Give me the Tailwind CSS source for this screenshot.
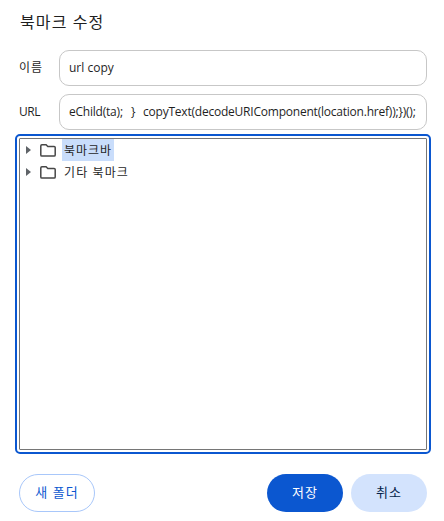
<!DOCTYPE html>
<html lang="ko">

<head>
  <meta charset="UTF-8">
  <meta name="viewport" content="width=device-width, initial-scale=1.0">
  <title>북마크 수정</title>
  <script src="https://cdn.jsdelivr.net/npm/@tailwindcss/browser@4"></script>
</head>

<body class="h-[521px] overflow-hidden bg-white pr-[17px] pl-[19px] pt-[10px] font-['Open_Sans','Noto_Sans_CJK_KR',sans-serif] text-[12px] text-[#1f1f1f]">

  <h1 class="h-6 pl-px text-[16px] leading-6 tracking-[1.1px] whitespace-nowrap">북마크 수정</h1>

  <div class="mt-4 flex flex-col gap-2">
    <div class="flex h-9 items-center">
      <label class="w-10 shrink-0 tracking-[1px]">이름</label>
      <div class="flex h-9 min-w-0 flex-1 items-center rounded-[10px] border border-[#c7c7c7] px-[9px] whitespace-pre">url copy</div>
    </div>
    <div class="flex h-9 items-center">
      <label class="w-10 shrink-0 tracking-[-0.4px]">URL</label>
      <div class="flex h-9 min-w-0 flex-1 items-center rounded-[10px] border border-[#c7c7c7] px-[9px] tracking-[-0.22px] whitespace-pre"><span class="w-[62px] shrink-0">eChild(ta);</span><span class="w-[12px] shrink-0">}</span><span>copyText(decodeURIComponent(location.href));})();</span></div>
    </div>
  </div>

  <!-- folder tree, focused -->
  <div class="mt-2 h-[312px] rounded-[1px] border border-[#767676] outline-2 outline-offset-2 outline-[#0b57d0]">
    <div class="flex h-[22px] items-center">
      <svg class="ml-[6px] h-[8px] w-[5px]" viewBox="0 0 5 8" fill="#5f6368"><path d="M0 0L5 4L0 8Z" /></svg>
      <svg class="ml-[9px] h-[13px] w-4" viewBox="0 0 16 13" fill="none" stroke="#474747" stroke-width="1.5"><path d="M.8 1.9Q.8.8 1.9.8H6.1L7.8 2.5H14.1Q15.2 2.5 15.2 3.6V11Q15.2 12.1 14.1 12.1H1.9Q.8 12.1.8 11Z" /></svg>
      <span class="ml-[6px] flex h-[22px] w-[52px] items-center bg-[#c9ddfb] pt-px pl-[2px] tracking-[1px] whitespace-nowrap">북마크바</span>
    </div>
    <div class="flex h-[22px] items-center">
      <svg class="ml-[6px] h-[8px] w-[5px]" viewBox="0 0 5 8" fill="#5f6368"><path d="M0 0L5 4L0 8Z" /></svg>
      <svg class="ml-[9px] h-[13px] w-4" viewBox="0 0 16 13" fill="none" stroke="#474747" stroke-width="1.5"><path d="M.8 1.9Q.8.8 1.9.8H6.1L7.8 2.5H14.1Q15.2 2.5 15.2 3.6V11Q15.2 12.1 14.1 12.1H1.9Q.8 12.1.8 11Z" /></svg>
      <span class="ml-2 pt-px tracking-[1.1px] whitespace-nowrap">기타 북마크</span>
    </div>
  </div>

  <div class="mt-6 flex gap-2 text-[13px] tracking-[1px]">
    <button class="mr-auto h-[38px] w-[76px] rounded-full border border-[#a8c7fa] text-[#0b57d0]">새 폴더</button>
    <button class="h-[38px] w-[76px] rounded-full bg-[#0b57d0] text-white">저장</button>
    <button class="h-[38px] w-[76px] rounded-full bg-[#d3e3fd] text-[#041e49]">취소</button>
  </div>

</body>

</html>
